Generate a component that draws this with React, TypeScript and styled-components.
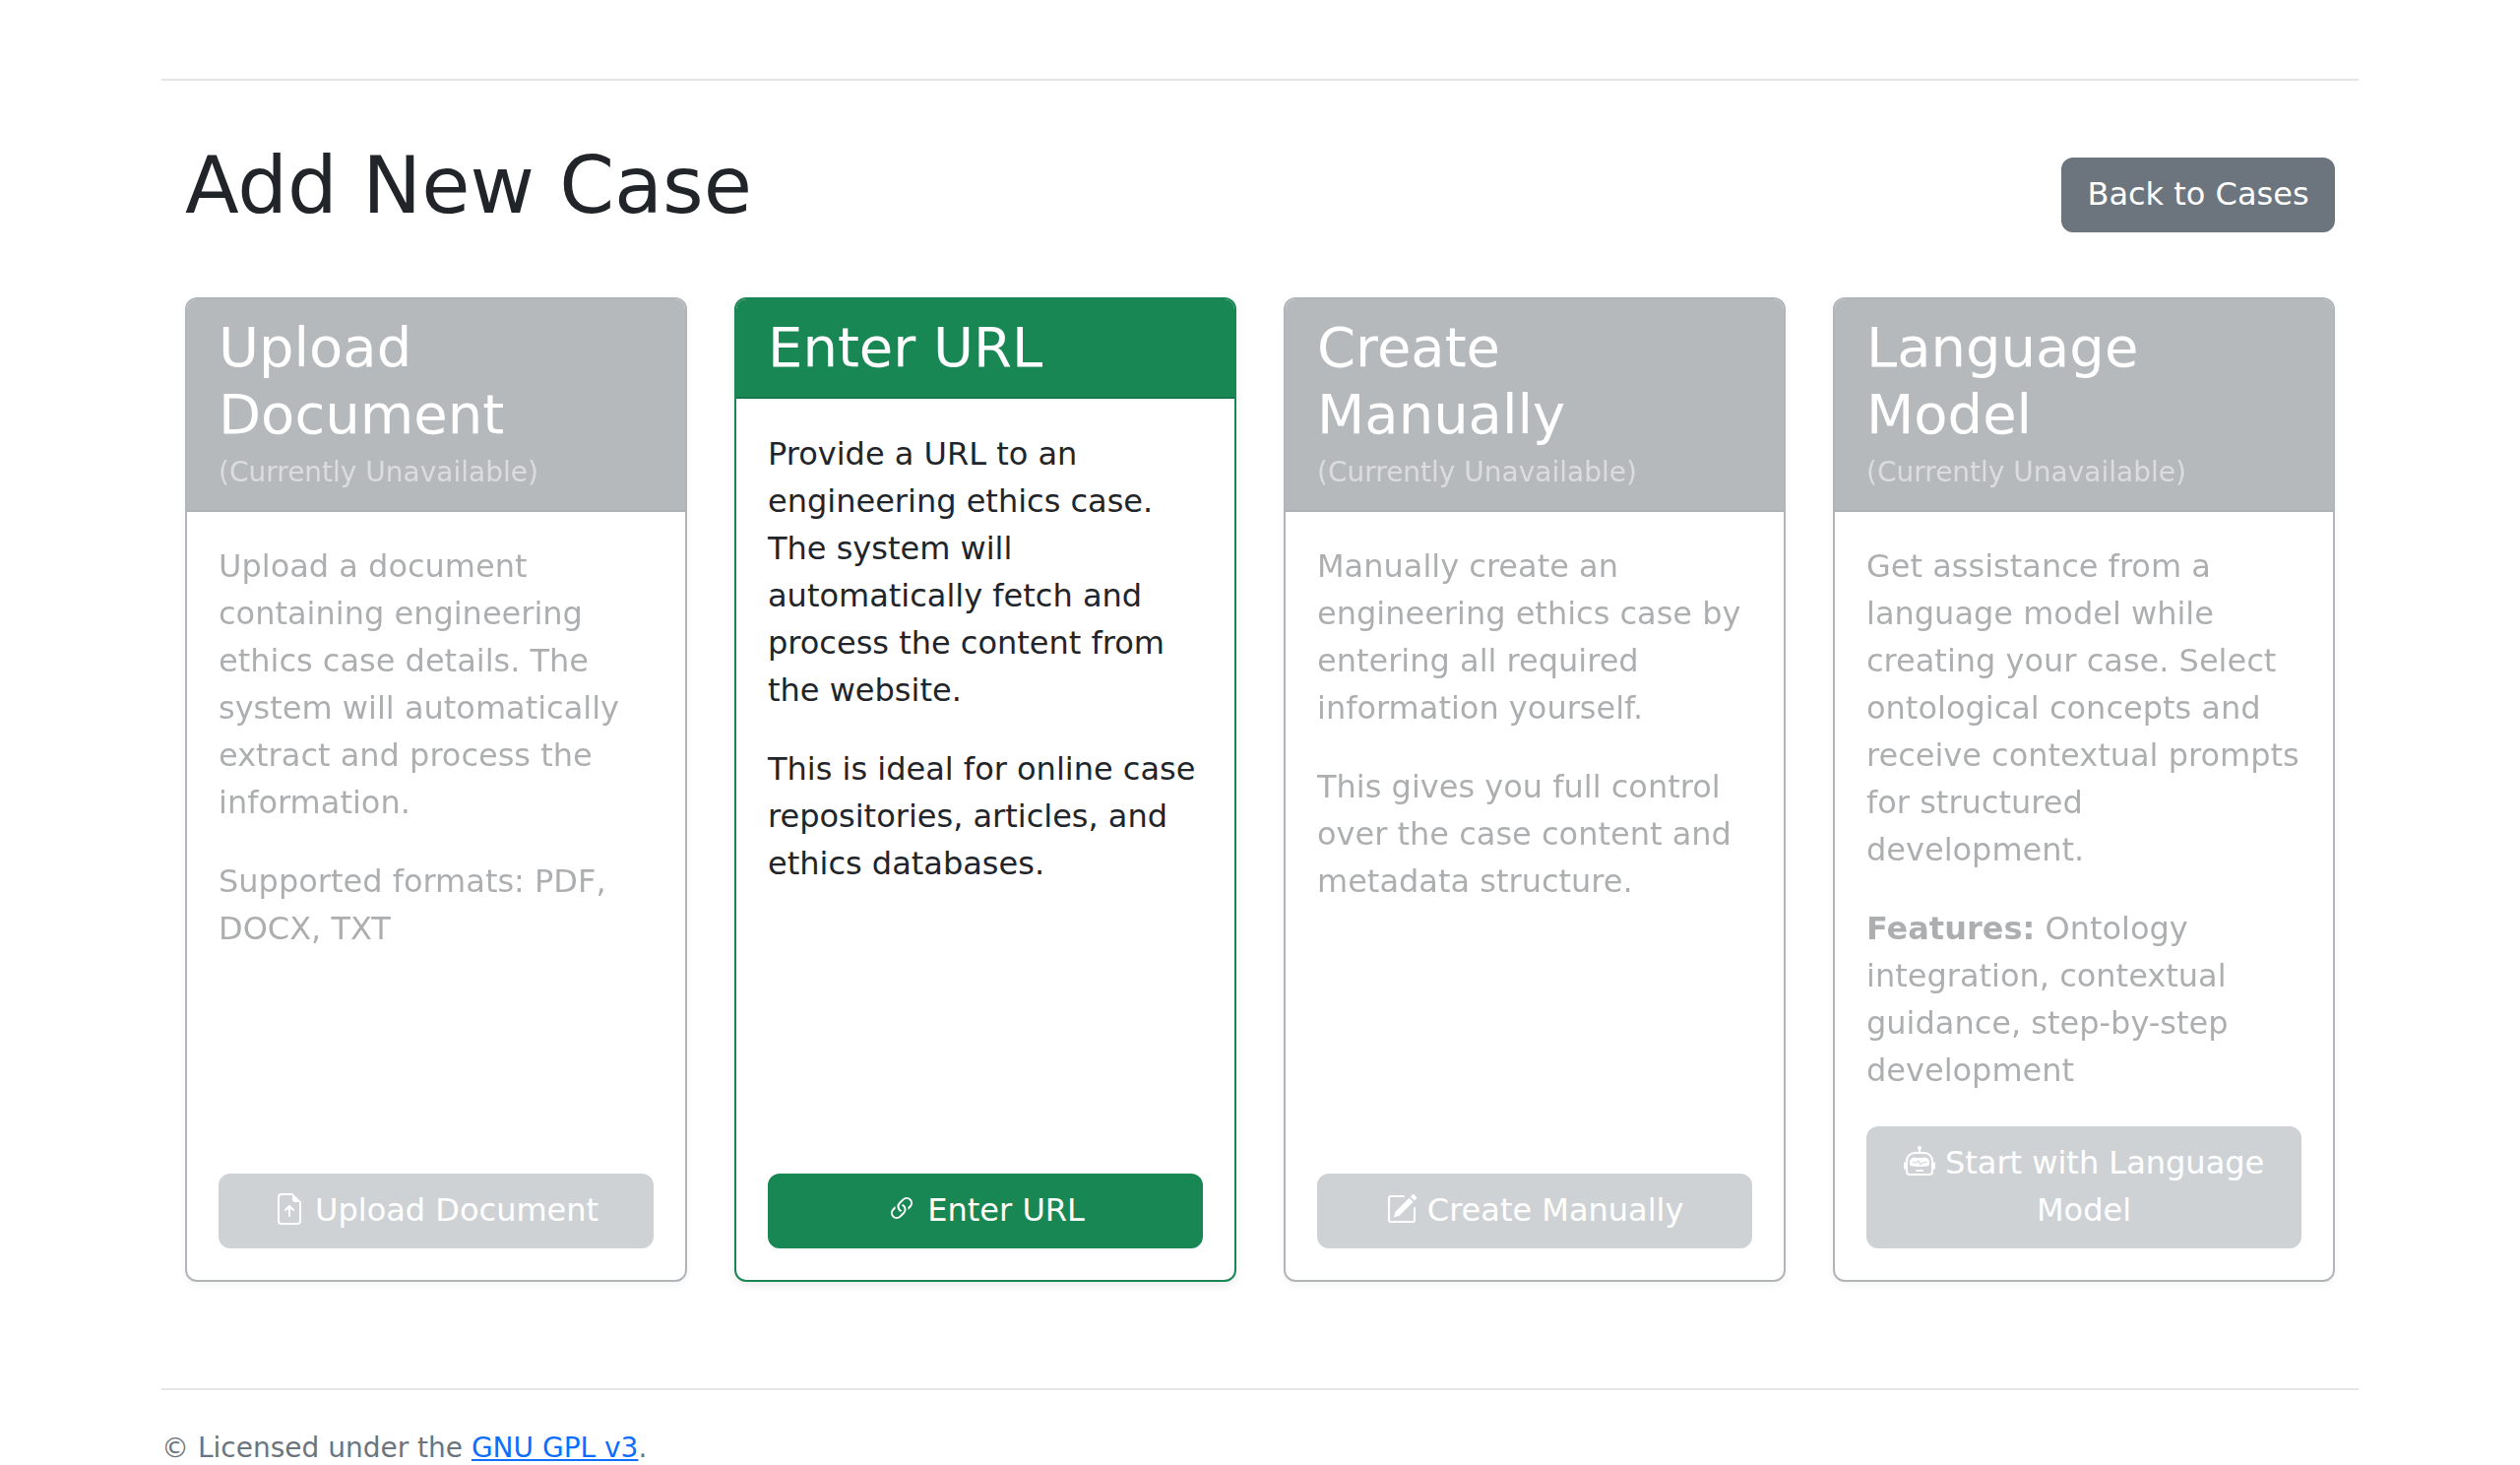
import { FC, ReactNode } from "react";
import styled, { createGlobalStyle } from "styled-components";
import { BsFileEarmarkArrowUp, BsLink45Deg, BsPencilSquare, BsRobot } from "react-icons/bs";

const GlobalStyle = createGlobalStyle`
  html, body {
    margin: 0;
    height: 1488px;
    overflow: hidden;
    background: #fff;
  }
  body {
    font-family: "DejaVu Sans", sans-serif;
    font-size: 32px;
    line-height: 48px;
    color: #212529;
  }
  * { box-sizing: border-box; }
`;

type OptionData = {
  title: string;
  text: ReactNode[];
  icon: ReactNode;
  button: string;
  active?: boolean;
};

const options: OptionData[] = [
  {
    title: "Upload Document",
    text: [
      "Upload a document containing engineering ethics case details. The system will automatically extract and process the information.",
      "Supported formats: PDF, DOCX, TXT",
    ],
    icon: <BsFileEarmarkArrowUp />,
    button: "Upload Document",
  },
  {
    title: "Enter URL",
    text: [
      "Provide a URL to an engineering ethics case. The system will automatically fetch and process the content from the website.",
      "This is ideal for online case repositories, articles, and ethics databases.",
    ],
    icon: <BsLink45Deg />,
    button: "Enter URL",
    active: true,
  },
  {
    title: "Create Manually",
    text: [
      "Manually create an engineering ethics case by entering all required information yourself.",
      "This gives you full control over the case content and metadata structure.",
    ],
    icon: <BsPencilSquare />,
    button: "Create Manually",
  },
  {
    title: "Language Model",
    text: [
      "Get assistance from a language model while creating your case. Select ontological concepts and receive contextual prompts for structured development.",
      <>
        <strong>Features:</strong> Ontology integration, contextual guidance, step-by-step development
      </>,
    ],
    icon: <BsRobot />,
    button: "Start with Language Model",
  },
];

const App: FC = () => {
  return (
    <Page>
      <GlobalStyle />
      <Main>
        <Header>
          <Title>Add New Case</Title>
          <BackButton href="#">Back to Cases</BackButton>
        </Header>
        <Options>
          {options.map((o) => (
            <Card key={o.title} $active={!!o.active}>
              <CardHeader $active={!!o.active}>
                <CardTitle>{o.title}</CardTitle>
                {!o.active && <Unavailable>(Currently Unavailable)</Unavailable>}
              </CardHeader>
              <CardBody $active={!!o.active}>
                {o.text.map((t, i) => (
                  <Paragraph key={i} $active={!!o.active}>{t}</Paragraph>
                ))}
                <ActionButton $active={!!o.active} disabled={!o.active}>
                  {o.icon} {o.button}
                </ActionButton>
              </CardBody>
            </Card>
          ))}
        </Options>
      </Main>
      <Footer>
        © Licensed under the <FooterLink href="#">GNU GPL v3</FooterLink>.
      </Footer>
    </Page>
  );
};

const Page = styled.div`
  width: 2280px;
  margin: 0 auto;
  padding: 80px 24px 0;
`;

const Main = styled.main`
  border-top: 2px solid #e5e5e5;
  padding: 59px 24px 0;
`;

const Header = styled.div`
  display: flex;
  justify-content: space-between;
  align-items: flex-end;
  margin-bottom: 66px;
`;

const Title = styled.h1`
  margin: 0 0 -1px;
  font-size: 80px;
  font-weight: 500;
  line-height: 96px;
`;

const BackButton = styled.a`
  display: inline-block;
  min-width: 278px;
  padding: 11px 24px 13px;
  border: 2px solid #6c757d;
  border-radius: 12px;
  background: #6c757d;
  color: #fff;
  text-align: center;
  text-decoration: none;
`;

const Options = styled.div`
  display: grid;
  grid-template-columns: repeat(4, 1fr);
  gap: 48px;
`;

const Card = styled.section<{ $active: boolean }>`
  display: flex;
  flex-direction: column;
  border: 2px solid ${(p) => (p.$active ? "#198754" : "#636b73")};
  border-radius: 12px;
  background: #fff;
  box-shadow: 0 4px 8px rgba(0, 0, 0, 0.075);
  opacity: ${(p) => (p.$active ? 1 : 0.5)};
`;

const CardHeader = styled.div<{ $active: boolean }>`
  padding: 15px 32px 16px;
  border-bottom: 2px solid rgba(0, 0, 0, 0.125);
  border-radius: 10px 10px 0 0;
  background: ${(p) => (p.$active ? "#198754" : "#6a7279")};
  color: #fff;
`;

const CardTitle = styled.h3`
  margin: 0;
  font-size: 56px;
  font-weight: 500;
  line-height: 68px;
`;

const Unavailable = styled.small`
  display: block;
  height: 47px;
  font-size: 28px;
  line-height: 49px;
  color: rgba(255, 255, 255, 0.5);
`;

const CardBody = styled.div<{ $active: boolean }>`
  flex: 1;
  display: flex;
  flex-direction: column;
  padding: ${(p) => (p.$active ? 32 : 31)}px 32px 32px;
`;

const Paragraph = styled.p<{ $active: boolean }>`
  margin: 0 0 32px;
  color: ${(p) => (p.$active ? "#212529" : "rgba(33, 37, 41, 0.75)")};

  &:last-of-type {
    margin-bottom: ${(p) => (p.$active ? 32 : 33)}px;
  }

  strong {
    font-weight: 700;
  }
`;

const ActionButton = styled.button<{ $active: boolean }>`
  margin-top: auto;
  padding: 11px 24px 13px;
  border: 2px solid ${(p) => (p.$active ? "#198754" : "#6c757d")};
  border-radius: 12px;
  background: ${(p) => (p.$active ? "#198754" : "#6c757d")};
  color: #fff;
  font: inherit;
  text-align: center;
  opacity: ${(p) => (p.$active ? 1 : 0.65)};

  svg {
    width: 32px;
    height: 32px;
    vertical-align: -4px;
  }
`;

const Footer = styled.footer`
  border-top: 2px solid #e5e5e5;
  margin-top: 108px;
  padding-top: 35px;
  color: #6c757d;
  font-size: 28px;
  line-height: 48px;
`;

const FooterLink = styled.a`
  color: #0d6efd;
`;

export default App;
